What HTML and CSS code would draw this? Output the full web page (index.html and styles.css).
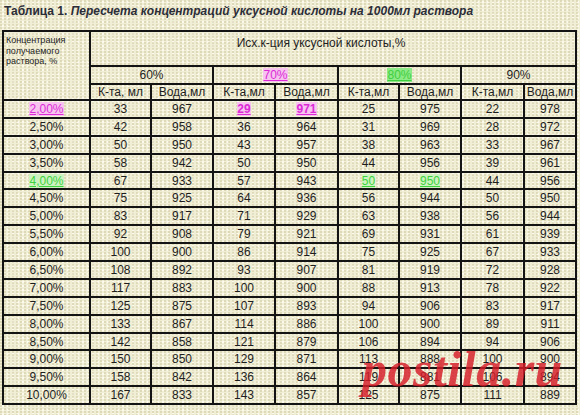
FILE: index.html
```html
<!DOCTYPE html>
<html lang="ru">
<head>
<meta charset="utf-8">
<title>Таблица 1</title>
<link rel="stylesheet" href="styles.css">
</head>
<body>
<div class="page">
  <h1 class="title">Таблица 1. <em>Пересчета концентраций уксусной кислоты на 1000мл раствора</em></h1>
  <table class="grid">
    <colgroup>
      <col class="c0"><col class="c1"><col class="c2"><col class="c3"><col class="c4"><col class="c5"><col class="c6"><col class="c7"><col class="c8">
    </colgroup>
    <thead>
      <tr class="h1">
        <th rowspan="3" class="corner">Концентрация<br>получаемого<br>раствора, %</th>
        <th colspan="8" class="main">Исх.к-ция уксусной кислоты,%</th>
      </tr>
      <tr class="h2">
        <th colspan="2">60%</th>
        <th colspan="2"><span class="pink">70%</span></th>
        <th colspan="2"><span class="greenbox">80%</span></th>
        <th colspan="2">90%</th>
      </tr>
      <tr class="h3">
        <th>К-та, мл</th><th>Вода,мл</th>
        <th>К-та,мл</th><th>Вода,мл</th>
        <th>К-та,мл</th><th>Вода,мл</th>
        <th>К-та,мл</th><th>Вода,мл</th>
      </tr>
    </thead>
    <tbody>
      <tr><td><span class="pink">2,00%</span></td><td>33</td><td>967</td><td><span class="pink b">29</span></td><td><span class="pink b">971</span></td><td>25</td><td>975</td><td>22</td><td>978</td></tr>
      <tr><td>2,50%</td><td>42</td><td>958</td><td>36</td><td>964</td><td>31</td><td>969</td><td>28</td><td>972</td></tr>
      <tr><td>3,00%</td><td>50</td><td>950</td><td>43</td><td>957</td><td>38</td><td>963</td><td>33</td><td>967</td></tr>
      <tr><td>3,50%</td><td>58</td><td>942</td><td>50</td><td>950</td><td>44</td><td>956</td><td>39</td><td>961</td></tr>
      <tr><td><span class="green">4,00%</span></td><td>67</td><td>933</td><td>57</td><td>943</td><td><span class="green">50</span></td><td><span class="green">950</span></td><td>44</td><td>956</td></tr>
      <tr><td>4,50%</td><td>75</td><td>925</td><td>64</td><td>936</td><td>56</td><td>944</td><td>50</td><td>950</td></tr>
      <tr><td>5,00%</td><td>83</td><td>917</td><td>71</td><td>929</td><td>63</td><td>938</td><td>56</td><td>944</td></tr>
      <tr><td>5,50%</td><td>92</td><td>908</td><td>79</td><td>921</td><td>69</td><td>931</td><td>61</td><td>939</td></tr>
      <tr><td>6,00%</td><td>100</td><td>900</td><td>86</td><td>914</td><td>75</td><td>925</td><td>67</td><td>933</td></tr>
      <tr><td>6,50%</td><td>108</td><td>892</td><td>93</td><td>907</td><td>81</td><td>919</td><td>72</td><td>928</td></tr>
      <tr><td>7,00%</td><td>117</td><td>883</td><td>100</td><td>900</td><td>88</td><td>913</td><td>78</td><td>922</td></tr>
      <tr><td>7,50%</td><td>125</td><td>875</td><td>107</td><td>893</td><td>94</td><td>906</td><td>83</td><td>917</td></tr>
      <tr><td>8,00%</td><td>133</td><td>867</td><td>114</td><td>886</td><td>100</td><td>900</td><td>89</td><td>911</td></tr>
      <tr><td>8,50%</td><td>142</td><td>858</td><td>121</td><td>879</td><td>106</td><td>894</td><td>94</td><td>906</td></tr>
      <tr><td>9,00%</td><td>150</td><td>850</td><td>129</td><td>871</td><td>113</td><td>888</td><td>100</td><td>900</td></tr>
      <tr><td>9,50%</td><td>158</td><td>842</td><td>136</td><td>864</td><td>119</td><td>881</td><td>106</td><td>894</td></tr>
      <tr><td>10,00%</td><td>167</td><td>833</td><td>143</td><td>857</td><td>125</td><td>875</td><td>111</td><td>889</td></tr>
    </tbody>
  </table>
  <div class="watermark">postila.ru</div>
</div>
</body>
</html>
```

FILE: styles.css
```css
html, body {
  margin: 0;
  padding: 0;
}
body {
  width: 580px;
  height: 415px;
  overflow: hidden;
  background-color: #f1eed6;
  background-image:
    radial-gradient(circle at 1px 1px, rgba(200, 192, 150, 0.45) 0.8px, transparent 1.2px),
    radial-gradient(circle at 3px 2px, rgba(255, 255, 245, 0.7) 0.8px, transparent 1.2px);
  background-size: 4px 3px, 5px 4px;
  font-family: "Liberation Sans", Arial, sans-serif;
  color: #1e1e1e;
}
.page {
  position: relative;
  width: 580px;
  height: 415px;
}
.title {
  margin: 0;
  padding: 4px 0 0 4px;
  height: 27px;
  box-sizing: border-box;
  font-size: 12px;
  line-height: 14px;
  font-weight: bold;
  color: #2b2d38;
  white-space: nowrap;
}
.title em {
  font-style: italic;
}
.grid {
  margin-left: 2px;
  margin-top: 3px;
  width: 573px;
  border-collapse: collapse;
  table-layout: fixed;
  border: 2px solid #141414;
}
.c0 { width: 87px; }
.c1 { width: 61px; }
.c2 { width: 62px; }
.c3 { width: 62px; }
.c4 { width: 63px; }
.c5 { width: 61px; }
.c6 { width: 62px; }
.c7 { width: 63px; }
.c8 { width: 52px; }
.grid th,
.grid td {
  border: 2px solid #141414;
  padding: 0;
  text-align: center;
  font-weight: normal;
  font-size: 12px;
  line-height: 14px;
  white-space: nowrap;
  overflow: hidden;
  color: #1e1e1e;
}
.grid td {
  height: 15.9px;
}
.h1 th {
  height: 29px;
}
.h1 .corner {
  vertical-align: top;
  text-align: left;
  font-size: 9px;
  line-height: 10.5px;
  padding: 3px 0 0 2px;
}
.h1 .main {
  vertical-align: top;
  padding: 4px 24px 0 0;
}
.h2 th {
  height: 16px;
}
.h3 th {
  height: 14px;
}
.pink {
  color: #dc2bd6;
  background: #f6c4ef;
  text-decoration: underline;
}
.pink.b {
  font-weight: bold;
}
.green {
  color: #3fd23f;
  background: #cdf2bf;
  text-decoration: underline;
}
.greenbox {
  color: #3fcf3f;
  background: #8eea86;
  text-decoration: underline;
}
.watermark {
  position: absolute;
  left: 362px;
  top: 344px;
  font-family: "Liberation Serif", "Times New Roman", serif;
  font-weight: bold;
  font-style: italic;
  font-size: 50px;
  line-height: 50px;
  color: rgba(214, 28, 40, 0.82);
  letter-spacing: 0.5px;
  pointer-events: none;
}
```
